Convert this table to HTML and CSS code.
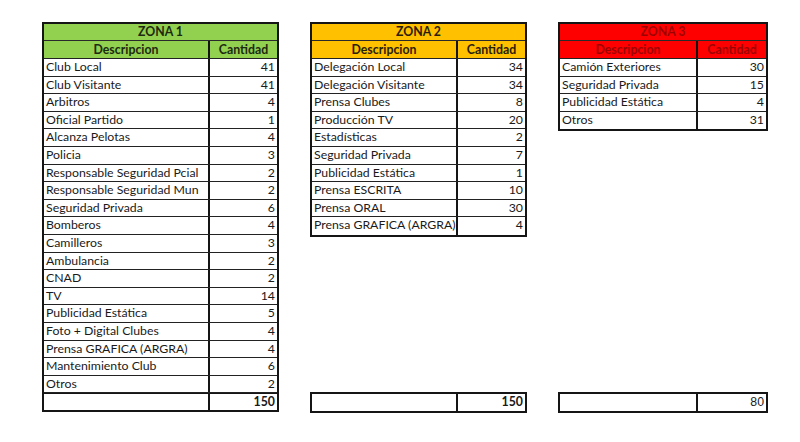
FILE: index.html
```html
<!DOCTYPE html>
<html lang="es">
<head>
<meta charset="utf-8">
<title>Zonas</title>
<link rel="stylesheet" href="styles.css">
</head>
<body>
<div class="page">
  <section class="zone zone1">
    <div class="sheet">
      <div class="title">ZONA 1</div>
      <div class="row head"><div class="desc">Descripcion</div><div class="qty">Cantidad</div></div>
      <div class="row"><div class="desc">Club Local</div><div class="qty">41</div></div>
      <div class="row"><div class="desc">Club Visitante</div><div class="qty">41</div></div>
      <div class="row"><div class="desc">Arbitros</div><div class="qty">4</div></div>
      <div class="row"><div class="desc">Oficial Partido</div><div class="qty">1</div></div>
      <div class="row"><div class="desc">Alcanza Pelotas</div><div class="qty">4</div></div>
      <div class="row"><div class="desc">Policia</div><div class="qty">3</div></div>
      <div class="row"><div class="desc">Responsable Seguridad Pcial</div><div class="qty">2</div></div>
      <div class="row"><div class="desc">Responsable Seguridad Mun</div><div class="qty">2</div></div>
      <div class="row"><div class="desc">Seguridad Privada</div><div class="qty">6</div></div>
      <div class="row"><div class="desc">Bomberos</div><div class="qty">4</div></div>
      <div class="row"><div class="desc">Camilleros</div><div class="qty">3</div></div>
      <div class="row"><div class="desc">Ambulancia</div><div class="qty">2</div></div>
      <div class="row"><div class="desc">CNAD</div><div class="qty">2</div></div>
      <div class="row"><div class="desc">TV</div><div class="qty">14</div></div>
      <div class="row"><div class="desc">Publicidad Estática</div><div class="qty">5</div></div>
      <div class="row"><div class="desc">Foto + Digital Clubes</div><div class="qty">4</div></div>
      <div class="row"><div class="desc">Prensa GRAFICA (ARGRA)</div><div class="qty">4</div></div>
      <div class="row"><div class="desc">Mantenimiento Club</div><div class="qty">6</div></div>
      <div class="row"><div class="desc">Otros</div><div class="qty">2</div></div>
      <div class="row total"><div class="desc"></div><div class="qty">150</div></div>
    </div>
  </section>

  <section class="zone zone2">
    <div class="sheet">
      <div class="title">ZONA 2</div>
      <div class="row head"><div class="desc">Descripcion</div><div class="qty">Cantidad</div></div>
      <div class="row"><div class="desc">Delegación Local</div><div class="qty">34</div></div>
      <div class="row"><div class="desc">Delegación Visitante</div><div class="qty">34</div></div>
      <div class="row"><div class="desc">Prensa Clubes</div><div class="qty">8</div></div>
      <div class="row"><div class="desc">Producción TV</div><div class="qty">20</div></div>
      <div class="row"><div class="desc">Estadísticas</div><div class="qty">2</div></div>
      <div class="row"><div class="desc">Seguridad Privada</div><div class="qty">7</div></div>
      <div class="row"><div class="desc">Publicidad Estática</div><div class="qty">1</div></div>
      <div class="row"><div class="desc">Prensa ESCRITA</div><div class="qty">10</div></div>
      <div class="row"><div class="desc">Prensa ORAL</div><div class="qty">30</div></div>
      <div class="row"><div class="desc">Prensa GRAFICA (ARGRA)</div><div class="qty">4</div></div>
    </div>
    <div class="sheet sum">
      <div class="row total"><div class="desc"></div><div class="qty">150</div></div>
    </div>
  </section>

  <section class="zone zone3">
    <div class="sheet">
      <div class="title">ZONA 3</div>
      <div class="row head"><div class="desc">Descripcion</div><div class="qty">Cantidad</div></div>
      <div class="row"><div class="desc">Camión Exteriores</div><div class="qty">30</div></div>
      <div class="row"><div class="desc">Seguridad Privada</div><div class="qty">15</div></div>
      <div class="row"><div class="desc">Publicidad Estática</div><div class="qty">4</div></div>
      <div class="row"><div class="desc">Otros</div><div class="qty">31</div></div>
    </div>
    <div class="sheet sum">
      <div class="row total"><div class="desc"></div><div class="qty sans">80</div></div>
    </div>
  </section>
</div>
</body>
</html>
```

FILE: styles.css
```css
html, body {
  margin: 0;
  padding: 0;
  background: #ffffff;
}

body {
  font-family: Lato, "Open Sans", "Liberation Sans", sans-serif;
  font-size: 12.3px;
  color: #1a1a1a;
}

.page {
  display: flex;
  align-items: flex-start;
  padding: 22px 0 0 42px;
  gap: 31px;
}

.zone {
  display: flex;
  flex-direction: column;
  height: 391px;
}

.zone1 { width: 237px; --split: 164px; --bg: #92d050; --ink: #1d2a10; }
.zone2 { width: 217px; --split: 144px; --bg: #ffc000; --ink: #2a2005; }
.zone3 { width: 210px; --split: 136px; --bg: #ff0000; --ink: #9c0000; }

.sheet {
  border: 2px solid #151515;
  box-sizing: border-box;
}

.sum {
  margin-top: auto;
}

.title {
  height: 16px;
  line-height: 16px;
  background: var(--bg);
  color: var(--ink);
  font-weight: 700;
  text-align: center;
  border-bottom: 1px solid #2a2a2a;
}

.row {
  display: grid;
  grid-template-columns: var(--split) 1fr;
  height: 17.6px;
  line-height: 16.6px;
  border-bottom: 1px solid #222;
  box-sizing: border-box;
}

.sheet > .row:last-child {
  border-bottom: none;
}

.desc {
  padding-left: 2px;
  white-space: nowrap;
}

.qty {
  border-left: 2px solid #151515;
  text-align: right;
  padding-right: 2px;
}

.head {
  height: 18px;
  line-height: 17px;
  background: var(--bg);
  color: var(--ink);
  font-weight: 700;
}

.head .desc {
  text-align: center;
  padding-left: 0;
}

.head .qty {
  text-align: center;
  padding-right: 0;
}

.total {
  height: 17px;
  line-height: 16px;
  font-weight: 700;
}

.zone1 .total {
  border-top: 1px solid #151515;
}

.sans {
  font-family: "Liberation Sans", Arial, sans-serif;
  font-weight: 400;
}
```
